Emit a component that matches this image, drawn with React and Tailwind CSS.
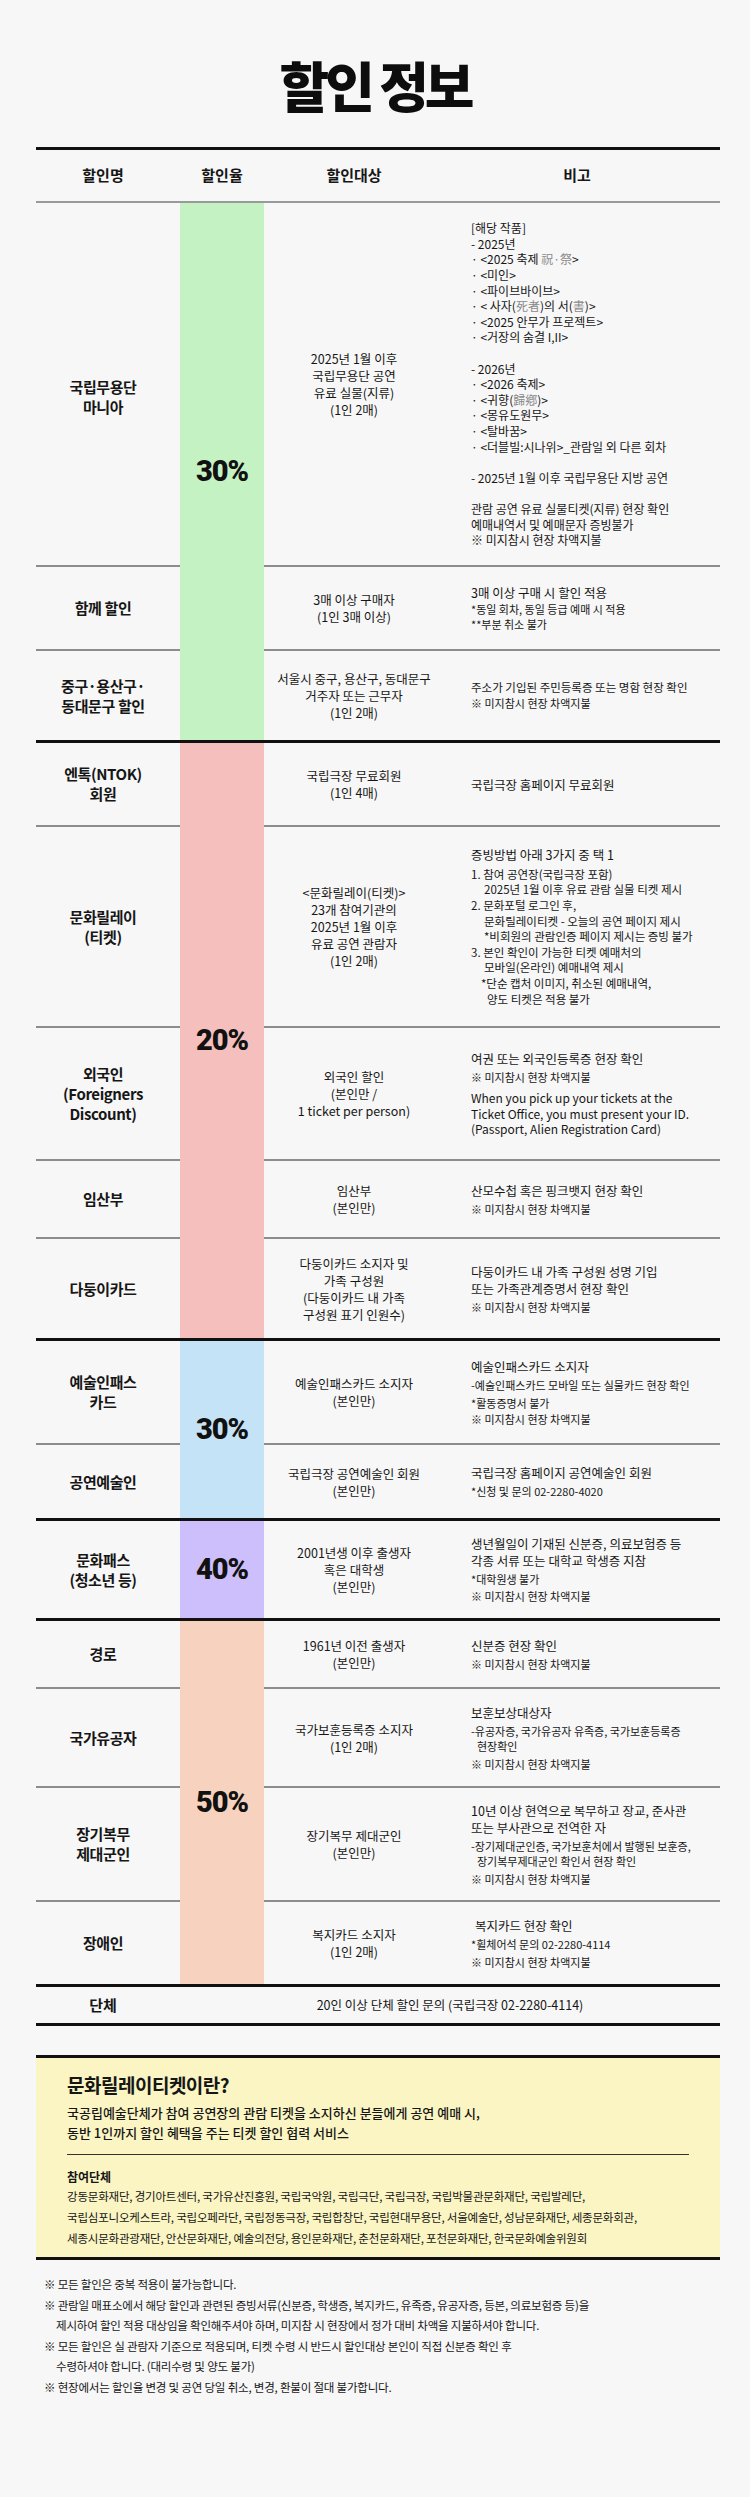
import React from 'react'

const FONT = "font-['Noto_Sans_CJK_KR','Noto_Sans',sans-serif]"

const Hj = ({ children }) => <span className="text-[#8a8a8a]">{children}</span>

// remark line types
const M = ({ children, className = '' }) => (
    <p className={`text-[12.5px] leading-[17px] whitespace-nowrap ${className}`}>{children}</p>
)
const N = ({ children, className = '' }) => (
    <p className={`mt-[3px] text-[11px] leading-[15px] whitespace-nowrap ${className}`}>{children}</p>
)
const L = ({ children, className = '' }) => (
    <p className={`text-[12px] leading-[15.6px] whitespace-nowrap ${className}`}>{children}</p>
)
const S = ({ children, className = '' }) => (
    <p className={`text-[11.5px] leading-[15.6px] whitespace-nowrap ${className}`}>{children}</p>
)

const NOPAY = '※ 미지참시 현장 차액지불'

const groups = [
    {
        rate: '30%',
        bg: 'bg-[#c5f2c2]',
        rowClass: 'row-start-1 row-end-4',
        rows: [
            {
                h: 'h-[362px]',
                name: ['국립무용단', '마니아'],
                nameShift: 'mt-[26px]',
                target: ['2025년 1월 이후', '국립무용단 공연', '유료 실물(지류)', '(1인 2매)'],
                remarks: (
                    <>
                        <L>[해당 작품]</L>
                        <L>- 2025년</L>
                        <L>· &lt;2025 축제 <Hj>祝·祭</Hj>&gt;</L>
                        <L>· &lt;미인&gt;</L>
                        <L>· &lt;파이브바이브&gt;</L>
                        <L>· &lt; 사자(<Hj>死者</Hj>)의 서(<Hj>書</Hj>)&gt;</L>
                        <L>· &lt;2025 안무가 프로젝트&gt;</L>
                        <L>· &lt;거장의 숨결 I,II&gt;</L>
                        <L>&nbsp;</L>
                        <L>- 2026년</L>
                        <L>· &lt;2026 축제&gt;</L>
                        <L>· &lt;귀향(<Hj>歸鄕</Hj>)&gt;</L>
                        <L>· &lt;몽유도원무&gt;</L>
                        <L>· &lt;탈바꿈&gt;</L>
                        <L>· &lt;더블빌:시나위&gt;_관람일 외 다른 회차</L>
                        <L>&nbsp;</L>
                        <L>- 2025년 1월 이후 국립무용단 지방 공연</L>
                        <L>&nbsp;</L>
                        <L>관람 공연 유료 실물티켓(지류) 현장 확인</L>
                        <L>예매내역서 및 예매문자 증빙불가</L>
                        <L className="text-[11px]">{NOPAY}</L>
                    </>
                ),
            },
            {
                h: 'h-[84px]',
                name: ['함께 할인'],
                target: ['3매 이상 구매자', '(1인 3매 이상)'],
                remarks: (
                    <>
                        <M>3매 이상 구매 시 할인 적용</M>
                        <N className="!mt-[1px]">*동일 회차, 동일 등급 예매 시 적용</N>
                        <N className="!mt-0">**부분 취소 불가</N>
                    </>
                ),
            },
            {
                h: 'h-[91px]',
                name: ['중구·용산구·', '동대문구 할인'],
                target: ['서울시 중구, 용산구, 동대문구', '거주자 또는 근무자', '(1인 2매)'],
                remarks: (
                    <>
                        <S>주소가 기입된 주민등록증 또는 명함 현장 확인</S>
                        <N className="!mt-0">{NOPAY}</N>
                    </>
                ),
            },
        ],
    },
    {
        rate: '20%',
        bg: 'bg-[#f4bfbd]',
        rowClass: 'row-start-1 row-end-6',
        rows: [
            {
                h: 'h-[82px]',
                name: ['엔톡(NTOK)', '회원'],
                target: ['국립극장 무료회원', '(1인 4매)'],
                remarks: <M>국립극장 홈페이지 무료회원</M>,
            },
            {
                h: 'h-[201px]',
                name: ['문화릴레이', '(티켓)'],
                target: ['<문화릴레이(티켓)>', '23개 참여기관의', '2025년 1월 이후', '유료 공연 관람자', '(1인 2매)'],
                remarks: (
                    <>
                        <M>증빙방법 아래 3가지 중 택 1</M>
                        <div className="mt-[4px]">
                            <S>1. 참여 공연장(국립극장 포함)</S>
                            <S className="pl-[13px]">2025년 1월 이후 유료 관람 실물 티켓 제시</S>
                            <S>2. 문화포털 로그인 후,</S>
                            <S className="pl-[13px]">문화릴레이티켓 - 오늘의 공연 페이지 제시</S>
                            <S className="pl-[13px]">*비회원의 관람인증 페이지 제시는 증빙 불가</S>
                            <S>3. 본인 확인이 가능한 티켓 예매처의</S>
                            <S className="pl-[13px]">모바일(온라인) 예매내역 제시</S>
                            <S className="pl-[10px]">*단순 캡처 이미지, 취소된 예매내역,</S>
                            <S className="pl-[16px]">양도 티켓은 적용 불가</S>
                        </div>
                    </>
                ),
            },
            {
                h: 'h-[133px]',
                name: ['외국인', '(Foreigners', 'Discount)'],
                target: ['외국인 할인', '(본인만 /', '1 ticket per person)'],
                remarks: (
                    <>
                        <M>여권 또는 외국인등록증 현장 확인</M>
                        <N>{NOPAY}</N>
                        <div className="mt-[5px]">
                            <L>When you pick up your tickets at the</L>
                            <L>Ticket Office, you must present your ID.</L>
                            <L>(Passport, Alien Registration Card)</L>
                        </div>
                    </>
                ),
            },
            {
                h: 'h-[78px]',
                name: ['임산부'],
                target: ['임산부', '(본인만)'],
                remarks: (
                    <>
                        <M>산모수첩 혹은 핑크뱃지 현장 확인</M>
                        <N>{NOPAY}</N>
                    </>
                ),
            },
            {
                h: 'h-[101px]',
                name: ['다둥이카드'],
                target: ['다둥이카드 소지자 및', '가족 구성원', '(다둥이카드 내 가족', '구성원 표기 인원수)'],
                remarks: (
                    <>
                        <M>다둥이카드 내 가족 구성원 성명 기입</M>
                        <M>또는 가족관계증명서 현장 확인</M>
                        <N>{NOPAY}</N>
                    </>
                ),
            },
        ],
    },
    {
        rate: '30%',
        bg: 'bg-[#c4e3f6]',
        rowClass: 'row-start-1 row-end-3',
        rows: [
            {
                h: 'h-[102px]',
                name: ['예술인패스', '카드'],
                target: ['예술인패스카드 소지자', '(본인만)'],
                remarks: (
                    <>
                        <M>예술인패스카드 소지자</M>
                        <N>-예술인패스카드 모바일 또는 실물카드 현장 확인</N>
                        <N>*활동증명서 불가</N>
                        <N className="!mt-[1px]">{NOPAY}</N>
                    </>
                ),
            },
            {
                h: 'h-[75px]',
                name: ['공연예술인'],
                target: ['국립극장 공연예술인 회원', '(본인만)'],
                remarks: (
                    <>
                        <M>국립극장 홈페이지 공연예술인 회원</M>
                        <N>*신청 및 문의 02-2280-4020</N>
                    </>
                ),
            },
        ],
    },
    {
        rate: '40%',
        bg: 'bg-[#cdbffc]',
        rowClass: 'row-start-1 row-end-2',
        rows: [
            {
                h: 'h-[97px]',
                name: ['문화패스', '(청소년 등)'],
                target: ['2001년생 이후 출생자', '혹은 대학생', '(본인만)'],
                remarks: (
                    <>
                        <M>생년월일이 기재된 신분증, 의료보험증 등</M>
                        <M>각종 서류 또는 대학교 학생증 지참</M>
                        <N>*대학원생 불가</N>
                        <N className="!mt-[2px]">{NOPAY}</N>
                    </>
                ),
            },
        ],
    },
    {
        rate: '50%',
        bg: 'bg-[#f7d3bf]',
        rowClass: 'row-start-1 row-end-5',
        rows: [
            {
                h: 'h-[66px]',
                name: ['경로'],
                target: ['1961년 이전 출생자', '(본인만)'],
                remarks: (
                    <>
                        <M>신분증 현장 확인</M>
                        <N>{NOPAY}</N>
                    </>
                ),
            },
            {
                h: 'h-[99px]',
                name: ['국가유공자'],
                target: ['국가보훈등록증 소지자', '(1인 2매)'],
                remarks: (
                    <>
                        <M>보훈보상대상자</M>
                        <N>
                            -유공자증, 국가유공자 유족증, 국가보훈등록증
                            <br />
                            <span className="pl-[6px]">현장확인</span>
                        </N>
                        <N>{NOPAY}</N>
                    </>
                ),
            },
            {
                h: 'h-[114px]',
                name: ['장기복무', '제대군인'],
                target: ['장기복무 제대군인', '(본인만)'],
                remarks: (
                    <>
                        <M>10년 이상 현역으로 복무하고 장교, 준사관</M>
                        <M>또는 부사관으로 전역한 자</M>
                        <N>
                            -장기제대군인증, 국가보훈처에서 발행된 보훈증,
                            <br />
                            <span className="pl-[6px]">장기복무제대군인 확인서 현장 확인</span>
                        </N>
                        <N>{NOPAY}</N>
                    </>
                ),
            },
            {
                h: 'h-[84px]',
                name: ['장애인'],
                target: ['복지카드 소지자', '(1인 2매)'],
                remarks: (
                    <>
                        <M className="pl-[4px]">복지카드 현장 확인</M>
                        <N>*휠체어석 문의 02-2280-4114</N>
                        <N>{NOPAY}</N>
                    </>
                ),
            },
        ],
    },
]

const ThickLine = () => <div className="h-[3px] bg-[#111]" />

const Group = ({ group }) => (
    <div className="grid grid-cols-[144px_84px_180px_276px]">
        <div className={`col-start-2 ${group.rowClass} ${group.bg} flex items-center justify-center`}>
            <span className="font-['Roboto',sans-serif] font-black text-[29px] tracking-[-1px] text-[#111]">
                {group.rate}
            </span>
        </div>
        {group.rows.map((row, i) => {
            const line = i > 0 ? 'border-t-2 border-[#8c8c8c]' : ''
            return (
                <React.Fragment key={i}>
                    <div className={`col-start-1 ${row.h} ${line} pr-[10px] flex items-center justify-center text-center`}>
                        <div className={`text-[15px] leading-[20px] font-bold tracking-[-0.4px] ${row.nameShift || ''}`}>
                            {row.name.map((t) => (
                                <p key={t}>{t}</p>
                            ))}
                        </div>
                    </div>
                    <div className={`col-start-3 ${row.h} ${line} flex items-center justify-center text-center`}>
                        <div className="text-[12.5px] leading-[17px]">
                            {row.target.map((t) => (
                                <p key={t} className="whitespace-nowrap">{t}</p>
                            ))}
                        </div>
                    </div>
                    <div className={`col-start-4 ${row.h} ${line} pl-[27px] flex flex-col justify-center`}>
                        {row.remarks}
                    </div>
                </React.Fragment>
            )
        })}
    </div>
)

const orgs = [
    '강동문화재단, 경기아트센터, 국가유산진흥원, 국립국악원, 국립극단, 국립극장, 국립박물관문화재단, 국립발레단,',
    '국립심포니오케스트라, 국립오페라단, 국립정동극장, 국립합창단, 국립현대무용단, 서울예술단, 성남문화재단, 세종문화회관,',
    '세종시문화관광재단, 안산문화재단, 예술의전당, 용인문화재단, 춘천문화재단, 포천문화재단, 한국문화예술위원회',
]

export default function App() {
    return (
        <div className={`min-h-[2497px] bg-[#f7f7f7] text-[#161616] ${FONT}`}>
            <h1 className="pt-[57px] text-center text-[54px] leading-[56px] font-black tracking-[-4px] text-[#0d0d0d]">
                할인 정보
            </h1>

            <div className="mt-[34px] ml-[36px] w-[684px]">
                {/* header */}
                <div className="grid grid-cols-[144px_84px_180px_276px] h-[56px] border-t-[3px] border-t-[#111] border-b-2 border-b-[#9a9a9a] text-[15px] font-bold">
                    <div className="pr-[10px] flex items-center justify-center">할인명</div>
                    <div className="flex items-center justify-center">할인율</div>
                    <div className="flex items-center justify-center">할인대상</div>
                    <div className="pr-[10px] flex items-center justify-center">비고</div>
                </div>

                {groups.map((g, i) => (
                    <React.Fragment key={i}>
                        <Group group={g} />
                        <ThickLine />
                    </React.Fragment>
                ))}

                {/* group ticket */}
                <div className="grid grid-cols-[144px_540px] h-[36px]">
                    <div className="pr-[10px] flex items-center justify-center text-[15px] font-bold">단체</div>
                    <div className="flex items-center justify-center text-[12.5px]">
                        20인 이상 단체 할인 문의 (국립극장 02-2280-4114)
                    </div>
                </div>
                <ThickLine />

                {/* culture relay ticket box */}
                <div className="mt-[29px] bg-[#faf5c3] border-y-[3px] border-[#111] px-[31px] pt-[15px] pb-[8px]">
                    <h2 className="text-[19px] leading-[24px] font-bold tracking-[-0.5px]">문화릴레이티켓이란?</h2>
                    <div className="mt-[6px] text-[13px] leading-[20px] font-medium">
                        <p>국공립예술단체가 참여 공연장의 관람 티켓을 소지하신 분들에게 공연 예매 시,</p>
                        <p>동반 1인까지 할인 혜택을 주는 티켓 할인 협력 서비스</p>
                    </div>
                    <div className="mt-[11px] h-px bg-[#333]" />
                    <p className="mt-[13px] text-[12px] leading-[18px] font-bold">참여단체</p>
                    <div className="text-[11.5px] leading-[21px] tracking-[-0.2px]">
                        {orgs.map((o) => (
                            <p key={o} className="whitespace-nowrap">{o}</p>
                        ))}
                    </div>
                </div>

                {/* notes */}
                <div className="mt-[14px] pl-[8px] text-[11.5px] leading-[20.5px] tracking-[-0.2px]">
                    <p>※ 모든 할인은 중복 적용이 불가능합니다.</p>
                    <p>※ 관람일 매표소에서 해당 할인과 관련된 증빙서류(신분증, 학생증, 복지카드, 유족증, 유공자증, 등본, 의료보험증 등)을</p>
                    <p className="pl-[12px]">제시하여 할인 적용 대상임을 확인해주셔야 하며, 미지참 시 현장에서 정가 대비 차액을 지불하셔야 합니다.</p>
                    <p>※ 모든 할인은 실 관람자 기준으로 적용되며, 티켓 수령 시 반드시 할인대상 본인이 직접 신분증 확인 후</p>
                    <p className="pl-[12px]">수령하셔야 합니다. (대리수령 및 양도 불가)</p>
                    <p>※ 현장에서는 할인율 변경 및 공연 당일 취소, 변경, 환불이 절대 불가합니다.</p>
                </div>
            </div>
        </div>
    )
}
